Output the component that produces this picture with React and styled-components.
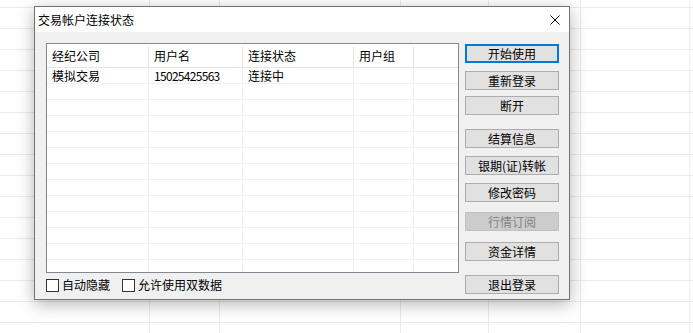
import React from "react";
import styled, { createGlobalStyle } from "styled-components";

const GlobalStyle = createGlobalStyle`
  html, body { margin: 0; padding: 0; background: #fff; }
  body { width: 693px; height: 333px; overflow: hidden; font-family: "Noto Sans CJK SC", "Noto Sans", sans-serif; font-size: 12px; color: #000; }
  * { box-sizing: border-box; }
`;

const Sheet = styled.div`
  position: relative;
  width: 693px;
  height: 333px;
  display: flex;
  background-color: #fff;
  background-image: repeating-linear-gradient(
    to bottom,
    transparent 0px,
    transparent 7px,
    #ebebeb 7px,
    #ebebeb 8px,
    transparent 8px,
    transparent 21px
  );
`;

const SheetCol = styled.div`
  flex: 0 0 ${(p) => p.$w}px;
  height: 100%;
  border-right: 1px solid #ebebeb;
`;

const Dialog = styled.div`
  position: absolute;
  left: 34px;
  top: 6px;
  width: 536px;
  height: 294px;
  border: 1px solid #727272;
  background: #f0f0f0;
  box-shadow: 0 4px 16px rgba(0, 0, 0, 0.3);
  display: flex;
  flex-direction: column;
`;

const TitleBar = styled.div`
  height: 25px;
  background: #fff;
  display: flex;
  align-items: center;
  justify-content: space-between;
  padding-left: 3px;
`;

const Title = styled.span`
  font-size: 12px;
  line-height: 12px;
`;

const CloseButton = styled.div`
  width: 28px;
  height: 25px;
  display: flex;
  align-items: center;
  justify-content: center;
`;

const Body = styled.div`
  flex: 1;
  display: flex;
  padding: 11px 10px 0 11px;
`;

const LeftPane = styled.div`
  width: 413px;
  display: flex;
  flex-direction: column;
`;

const ListBox = styled.div`
  width: 413px;
  height: 230px;
  border: 1px solid #828790;
  background: #fff;
  overflow: hidden;
`;

const HeaderRow = styled.div`
  display: flex;
  height: 24px;
  border-bottom: 1px solid #e5e5e5;
`;

const HeaderCell = styled.div`
  position: relative;
  flex: ${(p) => (p.$w ? `0 0 ${p.$w}px` : "1")};
  padding-left: 5px;
  display: flex;
  align-items: center;
  line-height: 12px;
  &::after {
    content: "";
    display: ${(p) => (p.$w ? "block" : "none")};
    position: absolute;
    right: 0;
    top: 3px;
    bottom: 0;
    width: 1px;
    background: #e5e5e5;
  }
`;

const Row = styled.div`
  display: flex;
  height: 16px;
  border-bottom: 1px solid #f0f0f0;
`;

const Cell = styled.div`
  flex: ${(p) => (p.$w ? `0 0 ${p.$w}px` : "1")};
  border-right: ${(p) => (p.$w ? "1px solid #f0f0f0" : "none")};
  padding-left: 5px;
  display: flex;
  align-items: center;
  line-height: 12px;
  letter-spacing: ${(p) => (p.$num ? "-0.7px" : "0")};
  white-space: nowrap;
`;

const OptionsRow = styled.div`
  display: flex;
  align-items: center;
  gap: 12px;
  margin-top: 5px;
`;

const CheckLabel = styled.label`
  display: flex;
  align-items: center;
  gap: 3px;
  line-height: 14px;
`;

const CheckBox = styled.span`
  width: 13px;
  height: 13px;
  border: 1px solid #333;
  background: #fff;
  display: inline-block;
`;

const RightPane = styled.div`
  width: 94px;
  margin-left: 6px;
  display: flex;
  flex-direction: column;
`;

const Button = styled.div`
  height: 19px;
  margin-top: ${(p) => p.$mt}px;
  display: flex;
  align-items: center;
  justify-content: center;
  line-height: 12px;
  background: ${(p) => (p.$disabled ? "#cccccc" : "#e1e1e1")};
  color: ${(p) => (p.$disabled ? "#838383" : "#000")};
  border: ${(p) =>
    p.$primary ? "2px solid #0078d7" : p.$disabled ? "1px solid #bfbfbf" : "1px solid #adadad"};
`;

const columns = [
  { label: "经纪公司", w: 102 },
  { label: "用户名", w: 94 },
  { label: "连接状态", w: 111 },
  { label: "用户组", w: 60 },
  { label: "", w: 0 },
];

const rows = [["模拟交易", "15025425563", "连接中", "", ""]];
const emptyRows = 13;

const buttons = [
  { label: "开始使用", mt: 1, primary: true },
  { label: "重新登录", mt: 8 },
  { label: "断开", mt: 6 },
  { label: "结算信息", mt: 14 },
  { label: "银期(证)转帐", mt: 8 },
  { label: "修改密码", mt: 8 },
  { label: "行情订阅", mt: 10, disabled: true },
  { label: "资金详情", mt: 11 },
  { label: "退出登录", mt: 14 },
];

const sheetCols = [150, 70, 181, 88, 92, 109];

export default function App() {
  return (
    <>
      <GlobalStyle />
      <Sheet>
        {sheetCols.map((w, i) => (
          <SheetCol key={i} $w={w} />
        ))}
        <Dialog>
          <TitleBar>
            <Title>交易帐户连接状态</Title>
            <CloseButton>
              <svg width="10" height="10" viewBox="0 0 10 10">
                <path d="M0.5 0.5 L9.5 9.5 M9.5 0.5 L0.5 9.5" stroke="#000" strokeWidth="1" fill="none" />
              </svg>
            </CloseButton>
          </TitleBar>
          <Body>
            <LeftPane>
              <ListBox>
                <HeaderRow>
                  {columns.map((c, i) => (
                    <HeaderCell key={i} $w={c.w}>
                      {c.label}
                    </HeaderCell>
                  ))}
                </HeaderRow>
                {rows.map((r, ri) => (
                  <Row key={ri}>
                    {r.map((v, ci) => (
                      <Cell key={ci} $w={columns[ci].w} $num={ci === 1}>
                        {v}
                      </Cell>
                    ))}
                  </Row>
                ))}
                {Array.from({ length: emptyRows }).map((_, ri) => (
                  <Row key={`e${ri}`}>
                    {columns.map((c, ci) => (
                      <Cell key={ci} $w={c.w} />
                    ))}
                  </Row>
                ))}
              </ListBox>
              <OptionsRow>
                <CheckLabel>
                  <CheckBox />
                  自动隐藏
                </CheckLabel>
                <CheckLabel>
                  <CheckBox />
                  允许使用双数据
                </CheckLabel>
              </OptionsRow>
            </LeftPane>
            <RightPane>
              {buttons.map((b, i) => (
                <Button key={i} $mt={b.mt} $primary={b.primary} $disabled={b.disabled}>
                  {b.label}
                </Button>
              ))}
            </RightPane>
          </Body>
        </Dialog>
      </Sheet>
    </>
  );
}
